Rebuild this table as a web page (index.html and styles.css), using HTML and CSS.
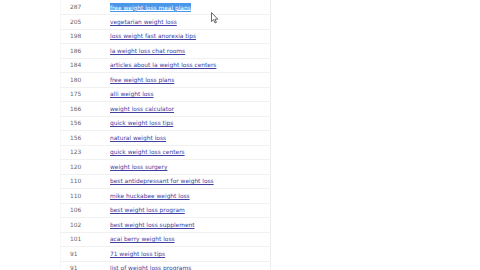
FILE: index.html
```html
<!DOCTYPE html>
<html>
<head>
<meta charset="utf-8">
<link rel="stylesheet" href="styles.css">
</head>
<body>
<div class="page">
  <table class="kw">
    <tr><td class="n">287</td><td><a class="sel" href="#">free weight loss meal plans</a></td></tr>
    <tr><td class="n">205</td><td><a href="#">vegetarian weight loss</a></td></tr>
    <tr><td class="n">198</td><td><a href="#">loss weight fast anorexia tips</a></td></tr>
    <tr><td class="n">186</td><td><a href="#">la weight loss chat rooms</a></td></tr>
    <tr><td class="n">184</td><td><a href="#">articles about la weight loss centers</a></td></tr>
    <tr><td class="n">180</td><td><a href="#">free weight loss plans</a></td></tr>
    <tr><td class="n">175</td><td><a href="#">alli weight loss</a></td></tr>
    <tr><td class="n">166</td><td><a href="#">weight loss calculator</a></td></tr>
    <tr><td class="n">156</td><td><a href="#">quick weight loss tips</a></td></tr>
    <tr><td class="n">156</td><td><a href="#">natural weight loss</a></td></tr>
    <tr><td class="n">123</td><td><a href="#">quick weight loss centers</a></td></tr>
    <tr><td class="n">120</td><td><a href="#">weight loss surgery</a></td></tr>
    <tr><td class="n">110</td><td><a href="#">best antidepressant for weight loss</a></td></tr>
    <tr><td class="n">110</td><td><a href="#">mike huckabee weight loss</a></td></tr>
    <tr><td class="n">106</td><td><a href="#">best weight loss program</a></td></tr>
    <tr><td class="n">102</td><td><a href="#">best weight loss supplement</a></td></tr>
    <tr><td class="n">101</td><td><a href="#">acai berry weight loss</a></td></tr>
    <tr><td class="n">91</td><td><a href="#">71 weight loss tips</a></td></tr>
    <tr><td class="n">91</td><td><a href="#">list of weight loss programs</a></td></tr>
  </table>
  <svg class="cursor" width="8" height="12" viewBox="0 0 8 12">
    <path d="M0.5 0.5 L0.5 9.5 L2.6 7.6 L4 11 L5.4 10.4 L4 7.2 L6.8 7.2 Z" fill="#fff" stroke="#444" stroke-width="0.8"/>
  </svg>
</div>
</body>
</html>
```
FILE: styles.css
```css
html, body {
  margin: 0;
  padding: 0;
  background: #fff;
}
.page {
  position: relative;
  width: 480px;
  height: 270px;
  overflow: hidden;
}
.kw {
  margin-left: 60px;
  width: 211px;
  border-collapse: collapse;
  border-right: 1px solid #ececec;
  border-left: 1px solid #f7f7f7;
  font-family: "DejaVu Sans", Verdana, sans-serif;
  font-size: 5.9px;
}
.kw tr {
  height: 14.5px;
}
.kw td {
  border-bottom: 1px solid #f1f1f1;
  padding: 0;
  vertical-align: middle;
}
.kw td.n {
  width: 40px;
  padding-left: 9px;
  color: #666;
}
.kw a {
  color: #4040a0;
  text-decoration: underline;
}
.kw a.sel {
  background: #4a96e8;
  color: #fff;
  padding: 1.5px 0;
}
.cursor {
  position: absolute;
  left: 211px;
  top: 12px;
}
```
